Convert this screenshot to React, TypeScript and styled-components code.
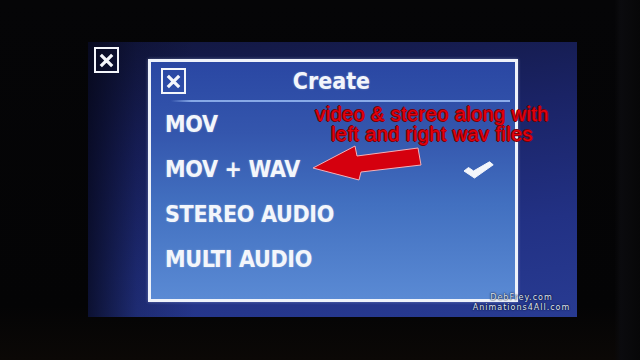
import React from "react";
import styled, { createGlobalStyle } from "styled-components";

const Global = createGlobalStyle`
  html, body { margin: 0; padding: 0; background: #040406; }
  #root { width: 640px; height: 360px; overflow: hidden; }
`;

const Bezel = styled.div`
  width: 640px;
  height: 360px;
  box-sizing: border-box;
  padding: 42px 0 0 88px;
  background:
    linear-gradient(90deg, rgba(0,0,0,0) 96%, #0b0b0e 97%, #070708 100%),
    linear-gradient(180deg, #050507 0%, #040405 85%, #0b0806 100%);
`;

const Screen = styled.div`
  position: relative;
  width: 489px;
  height: 275px;
  box-sizing: border-box;
  padding: 5px 0 0 6px;
  display: flex;
  align-items: flex-start;
  background:
    linear-gradient(90deg, rgba(4,5,20,0.75) 0%, rgba(4,5,20,0.2) 10%, rgba(0,0,0,0) 22%),
    linear-gradient(172deg, #12173f 0%, #1a2365 35%, #223184 70%, #283b92 100%);
`;

const CloseBox = styled.div<{ $size: number }>`
  width: ${(p) => p.$size}px;
  height: ${(p) => p.$size + 1}px;
  box-sizing: border-box;
  border: 2px solid #f4f6fb;
  display: flex;
  align-items: center;
  justify-content: center;
  flex: none;
`;

const Dialog = styled.div`
  margin: 12px 0 0 29px;
  width: 370px;
  height: 243px;
  box-sizing: border-box;
  border: 3px solid #eef2fa;
  display: flex;
  flex-direction: column;
  background: linear-gradient(180deg, #2a47a3 0%, #3456ad 30%, #4270c0 60%, #5a8ad4 100%);
  box-shadow: 0 0 3px rgba(200, 220, 255, 0.4);
`;

const Header = styled.div`
  display: grid;
  grid-template-columns: 1fr auto 1fr;
  align-items: start;
  height: 38px;
  padding: 6px 13px 0 10px;
  box-sizing: border-box;
`;

const Title = styled.div`
  font-family: "DejaVu Sans Condensed", "DejaVu Sans", sans-serif;
  font-weight: bold;
  font-size: 23px;
  line-height: 32px;
  margin-top: -6px;
  height: 38px;
  display: flex;
  align-items: center;
  color: #f2f5fb;
  text-shadow: 0 0 2px rgba(255,255,255,0.35);
`;

const Separator = styled.div`
  height: 2px;
  margin: 0 5px 0 20px;
  background: linear-gradient(90deg, rgba(140,175,235,0) 0%, #86a8e6 6%, #8cadeb 100%);
`;

const Row = styled.div`
  display: flex;
  align-items: center;
  justify-content: space-between;
  height: 45px;
  padding: 0 21px 0 14px;
`;

const Label = styled.span`
  font-family: "DejaVu Sans Condensed", "DejaVu Sans", sans-serif;
  font-weight: bold;
  font-size: 23px;
  line-height: 45px;
  color: #f3f6fb;
  letter-spacing: -0.3px;
  text-shadow: 0 0 2px rgba(255,255,255,0.35);
`;

const Annotation = styled.div`
  position: absolute;
  left: 222px;
  top: 62px;
  width: 244px;
  display: flex;
  flex-direction: column;
  align-items: center;
`;

const AnnotationLine = styled.div`
  font-family: "Liberation Sans", Arial, sans-serif;
  font-size: 20px;
  line-height: 20px;
  height: 20px;
  white-space: nowrap;
  letter-spacing: 0.4px;
  color: #e6000c;
  text-shadow:
    1px 0 0 #7c0008, -1px 0 0 #7c0008, 0 1px 0 #7c0008, 0 -1px 0 #7c0008;
`;

const ArrowSvg = styled.svg`
  position: absolute;
  left: 223px;
  top: 102px;
`;

const Watermark = styled.div`
  position: absolute;
  left: 380px;
  top: 251px;
  width: 107px;
  text-align: center;
  font-family: "DejaVu Sans", sans-serif;
  font-size: 8px;
  line-height: 10px;
  letter-spacing: 1px;
  color: #dfe4f0;
  text-shadow: 0 0 2px #0a1030, 0 0 1px #0a1030;
`;

const XIcon = ({ size }: { size: number }) => (
  <svg width={size} height={size} viewBox="0 0 20 20">
    <path d="M4 4 L16 16 M16 4 L4 16" stroke="#f4f6fb" strokeWidth="3.4" strokeLinecap="butt" />
  </svg>
);

const Check = () => (
  <svg width="31" height="18" viewBox="0 0 31 18">
    <path
      d="M1 10 L5.5 6.5 L10.5 10 L26.5 0.8 L30.2 3.8 L11.5 17 Z"
      fill="#f4f6fb"
      stroke="#f4f6fb"
      strokeWidth="1"
      strokeLinejoin="round"
    />
  </svg>
);

const items = ["MOV", "MOV + WAV", "STEREO AUDIO", "MULTI AUDIO"];

export default function App() {
  return (
    <>
      <Global />
      <Bezel>
        <Screen>
          <CloseBox $size={25}>
            <XIcon size={19} />
          </CloseBox>
          <Dialog>
            <Header>
              <CloseBox $size={25}>
                <XIcon size={19} />
              </CloseBox>
              <Title>Create</Title>
              <span />
            </Header>
            <Separator />
            {items.map((it) => (
              <Row key={it}>
                <Label>{it}</Label>
                {it === "MOV + WAV" && <Check />}
              </Row>
            ))}
          </Dialog>
          <ArrowSvg width="112" height="38" viewBox="0 0 112 38">
            <path
              d="M2 24 L44 2 L46 12 L107 4 L110 21 L50 28 L48 36 Z"
              fill="#d5000e"
              stroke="#f3b0b8"
              strokeWidth="1"
              strokeLinejoin="miter"
            />
          </ArrowSvg>
          <Annotation>
            <AnnotationLine>video &amp; stereo along with</AnnotationLine>
            <AnnotationLine>left and right wav files</AnnotationLine>
          </Annotation>
          <Watermark>
            DebFrey.com
            <br />
            Animations4All.com
          </Watermark>
        </Screen>
      </Bezel>
    </>
  );
}
